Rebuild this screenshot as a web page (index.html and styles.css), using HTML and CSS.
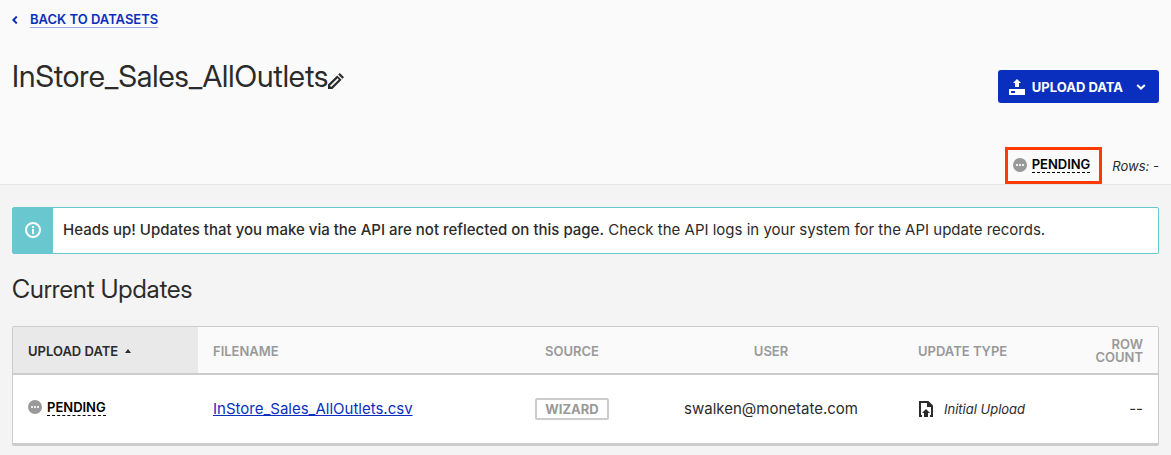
FILE: index.html
```
<!DOCTYPE html>
<html lang="en">
<head>
  <meta charset="UTF-8">
  <meta name="viewport" content="width=device-width, initial-scale=1">
  <title>InStore_Sales_AllOutlets - Datasets</title>
  <link rel="stylesheet" href="styles.css">
</head>
<body>
  <header class="page-header">
    <nav class="back-nav">
      <svg class="back-icon" width="6" height="8" viewBox="0 0 6 8"><path d="M4.800 .6 1.400 4 4.800 7.400" fill="none" stroke="currentColor" stroke-width="2"/></svg>
      <a class="back-link" href="#">Back to Datasets</a>
    </nav>
    <div class="title-row">
      <div class="title">
        <h1>InStore_Sales_AllOutlets</h1>
        <button class="edit-button" type="button" aria-label="Edit name">
          <svg width="16" height="16" viewBox="0 0 16 16"><path d="M0 11.600 9.200 2.400l4.400 4.400L4.400 16H0zM10.200 1.600 11.800 0l4.200 4.200-1.600 1.600z" fill="#2b2b2b"/><path d="m2.600 13.400 7.600-7.600" stroke="#fafafa" stroke-width="1.800"/></svg>
        </button>
      </div>
      <button class="upload-button" type="button">
        <svg width="16" height="16" viewBox="0 0 16 16"><path d="M8 0 12 4H10V8H6V4H4zM0 10H16V16H0z" fill="#fff"/><path d="M2 12h4v2H2z" fill="#0a2fbf"/></svg>
        <span>Upload Data</span>
        <svg class="caret" width="10" height="6" viewBox="0 0 10 6"><path d="m1.200 1 3.800 3.600L8.800 1" fill="none" stroke="#fff" stroke-width="2"/></svg>
      </button>
    </div>
    <div class="status-row">
      <div class="status-highlight">
        <span class="status">
          <svg width="14" height="14" viewBox="0 0 14 14"><circle cx="7" cy="7" r="7" fill="#999"/><path d="M3 6h2v2H3zM6 6h2v2H6zM9 6h2v2H9z" fill="#eee"/></svg>
          <span class="status-text">Pending</span>
        </span>
      </div>
      <span class="rows">Rows: -</span>
    </div>
  </header>

  <main class="content">
    <div class="notice">
      <div class="notice-icon">
        <svg width="16" height="16" viewBox="0 0 16 16"><circle cx="8" cy="8" r="7" fill="none" stroke="#fff" stroke-width="2"/><path d="M7 4h2v2H7zM7 7h2v5H7z" fill="#fff"/></svg>
      </div>
      <p><strong>Heads up! Updates that you make via the API are not reflected on this page.</strong> Check the API logs in your system for the API update records.</p>
    </div>

    <h2>Current Updates</h2>

    <table class="updates">
      <thead>
        <tr>
          <th class="col-date sorted" aria-sort="ascending">Upload Date <svg class="sort-icon" width="6" height="4" viewBox="0 0 6 4"><path d="M3 0 6 4H0z" fill="#2b2b2b"/></svg></th>
          <th class="col-file">Filename</th>
          <th class="col-source">Source</th>
          <th class="col-user">User</th>
          <th class="col-type">Update Type</th>
          <th class="col-count">Row Count</th>
        </tr>
      </thead>
      <tbody>
        <tr>
          <td class="col-date">
            <span class="status">
              <svg width="14" height="14" viewBox="0 0 14 14"><circle cx="7" cy="7" r="7" fill="#999"/><path d="M3 6h2v2H3zM6 6h2v2H6zM9 6h2v2H9z" fill="#eee"/></svg>
              <span class="status-text">Pending</span>
            </span>
          </td>
          <td class="col-file"><a href="#">InStore_Sales_AllOutlets.csv</a></td>
          <td class="col-source"><span class="tag">Wizard</span></td>
          <td class="col-user">swalken@monetate.com</td>
          <td class="col-type">
            <span class="update-type">
              <svg width="16" height="16" viewBox="0 0 16 16"><path d="M4 15H2V1h8l4 4v10h-2" fill="none" stroke="#2b2b2b" stroke-width="2"/><path d="M9 1v5h5V4.500L10.500 1zM8 8l4 4h-2v4H6v-4H4z" fill="#2b2b2b"/></svg>
              <em>Initial Upload</em>
            </span>
          </td>
          <td class="col-count">--</td>
        </tr>
      </tbody>
    </table>
  </main>
</body>
</html>
```
FILE: styles.css
```
* {
  box-sizing: border-box;
}
body {
  margin: 0;
  background: #f4f4f4;
  color: #2b2b2b;
  font-family: Inter, "Liberation Sans", sans-serif;
  font-size: 15px;
  line-height: 20px;
}
svg {
  flex-shrink: 0;
}
button {
  font-family: inherit;
  border: none;
  cursor: pointer;
}
a {
  color: #0a2fbf;
}
h1, h2 {
  font-family: "Inter Display", Inter, "Liberation Sans", sans-serif;
  font-weight: 400;
}
.page-header {
  background: #fafafa;
  border-bottom: 1px solid #e6e6e6;
  padding: 12px 12px 0;
}
.back-nav {
  display: flex;
  align-items: center;
  gap: 12px;
  color: #0a2fbf;
}
.back-link {
  font-size: 13px;
  font-weight: 600;
  line-height: 15px;
  text-transform: uppercase;
  text-decoration: none;
  border-bottom: 1px solid #9dacdf;
}
.title-row {
  display: flex;
  justify-content: space-between;
  align-items: flex-end;
  margin-top: 30px;
}
.title {
  display: flex;
  align-items: flex-end;
  padding-bottom: 9px;
}
h1 {
  margin: 0;
  font-size: 30px;
  line-height: 36px;
}
.edit-button {
  display: flex;
  padding: 0 0 5px;
  background: none;
}
.upload-button {
  display: flex;
  align-items: center;
  gap: 7px;
  height: 33px;
  padding: 0 13px 0 11px;
  border-radius: 3px;
  background: #0a2fbf;
  color: #fff;
  font-size: 13px;
  font-weight: 700;
  text-transform: uppercase;
}
.caret {
  margin-left: 6px;
}
.status-row {
  display: flex;
  justify-content: flex-end;
  align-items: center;
  gap: 10px;
  margin-top: 44px;
}
.status-highlight {
  display: flex;
  align-items: center;
  height: 37px;
  padding: 0 9px 2px 5px;
  border: 3px solid #ff3b00;
}
.status {
  display: inline-flex;
  align-items: center;
  gap: 5px;
}
.status-text {
  border-bottom: 1px dashed #000;
  color: #000;
  font-size: 13px;
  font-weight: 600;
  line-height: 16px;
  text-transform: uppercase;
}
.rows {
  font-size: 13px;
  font-style: italic;
}
.content {
  padding: 22px 12px 9px;
}
.notice {
  display: flex;
  min-height: 47px;
  border: 1px solid #68c7cf;
  border-radius: 2px;
  background: #fff;
}
.notice-icon {
  display: flex;
  align-items: center;
  justify-content: center;
  width: 40px;
  padding-bottom: 2px;
  background: #68c7cf;
}
.notice p {
  margin: 0;
  padding: 12px 10px;
}
.notice strong {
  font-weight: 500;
}
h2 {
  margin: 20px 0 21px;
  font-size: 25px;
  line-height: 31px;
}
.updates {
  width: 100%;
  table-layout: fixed;
  border-collapse: separate;
  border-spacing: 0;
  border: 1px solid #ccc;
  border-bottom-width: 3px;
  border-radius: 2px;
  background: #fff;
}
th {
  height: 48px;
  padding: 2px 15px 0;
  border-bottom: 2px solid #ccc;
  background: #fafafa;
  color: #999;
  font-size: 13px;
  font-weight: 600;
  line-height: 13px;
  text-align: left;
  text-transform: uppercase;
}
td {
  height: 68px;
  padding: 0 15px;
}
th.sorted {
  background: #e9e9e9;
  color: #2b2b2b;
}
.sort-icon {
  margin-left: 4px;
  vertical-align: 3px;
}
.col-date {
  width: 185px;
}
.col-source {
  width: 134px;
  text-align: center;
}
.col-user {
  width: 264px;
  text-align: center;
}
.col-type {
  width: 160px;
}
.col-count {
  width: 95px;
  text-align: right;
}
.tag {
  display: inline-block;
  padding: 0 8px;
  border: 2px solid #ccc;
  border-radius: 2px;
  color: #999;
  font-size: 13px;
  font-weight: 700;
  line-height: 18px;
  text-transform: uppercase;
}
.update-type {
  display: flex;
  align-items: center;
  gap: 10px;
  font-size: 13px;
}
```
